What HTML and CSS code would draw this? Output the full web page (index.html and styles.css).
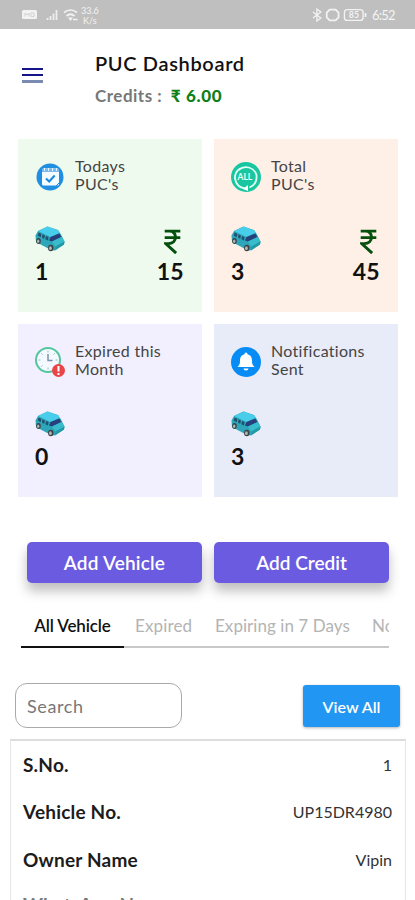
FILE: index.html
```html
<!DOCTYPE html>
<html lang="en">
<head>
<meta charset="utf-8">
<title>PUC Dashboard</title>
<link rel="stylesheet" href="styles.css">
</head>
<body>
<svg width="0" height="0" class="defs" aria-hidden="true">
  <symbol id="car" viewBox="0 0 30 26">
    <path d="M0.500 9.500 L3 5 L12.500 0.500 L23 4 L26 8.500 L29.500 15.500 L29 18.500 L19.500 24.500 L16 24 L1 16 Z" fill="#2ca6b8"/>
    <path d="M3 5 L12.500 0.500 L23.500 4.500 L24.500 7 L15.500 11 Z" fill="#48cdeb"/>
    <path d="M3.500 6.500 L13.500 11 L13 14.500 L2.800 9.800 Z" fill="#1d5471"/>
    <path d="M15.500 11 L24.200 7.500 L26.500 11 L17 15.500 L14 14.500 Z" fill="#27407c"/>
    <path d="M17 15.500 L26.500 11 L29.500 15.500 L20.500 20.500 Z" fill="#38bccb"/>
    <path d="M20.500 20.500 L29.500 15.500 L29 18.500 L20 24.500 Z" fill="#219aa5"/>
    <path d="M7 7.500l-.7 4.500M10.500 9l-.7 4.500" stroke="#35b5cc" fill="none"/>
    <ellipse cx="3.500" cy="15" rx="2.300" ry="3" fill="#3c4147"/><ellipse cx="3.200" cy="15.200" rx="1.200" ry="1.700" fill="#b3b5b3"/>
    <ellipse cx="15.800" cy="22" rx="2.700" ry="3.300" fill="#3c4147"/><ellipse cx="15.400" cy="22.200" rx="1.400" ry="1.900" fill="#b3b5b3"/>
  </symbol>
  <symbol id="rupee" viewBox="0 0 16 24">
    <path d="M.5 2H15.500M.5 8.300H15.500M1 2H5C13 2 13 14 4 14H1.500L11.500 23.200" fill="none" stroke="#06500d" stroke-width="2.800"/>
  </symbol>
</svg>

<div class="status">
  <svg class="status-left" viewBox="0 0 57 24">
    <rect x="0" y="7" width="15" height="9" rx="1.500" fill="#f2f2f2"/>
    <path d="M3 13.500V10l2 2 2-2v3.500M9 10v3.500h3V10z" fill="none" stroke="#d2d2d2"/>
    <path d="M25.500 17v-2M28.500 17v-4M31.500 17v-6.500M34.500 17V7" stroke="#eee" stroke-width="1.800"/>
    <path d="M42 9.500q6.500-5 13 0M44.500 13q4-3.500 8 0" fill="none" stroke="#f2f2f2" stroke-width="1.700"/>
    <path d="M46 14.500h5l-2.500 3.500z" fill="#f2f2f2"/><path d="M51 16.500h4.500" stroke="#f2f2f2" stroke-width="1.500"/>
  </svg>
  <span class="rate"><span>33.6</span><span>K/s</span></span>
  <svg class="status-right" viewBox="0 0 58 16">
    <path d="M1 5l8 6-4 3V2l4 3-8 6" fill="none" stroke="#f3f3f3" stroke-width="1.300"/>
    <path d="M18 2.500h6l3 3v5l-3 3h-6l-3-3v-5z" fill="none" stroke="#f3f3f3" stroke-width="1.800"/>
    <rect x="33" y="2.500" width="19" height="11" rx="3" fill="none" stroke="#f3f3f3" stroke-width="1.400"/><path d="M54.500 6v4" stroke="#f3f3f3" stroke-width="1.800"/>
    <text x="37.500" y="11.200" class="batt">85</text>
  </svg>
  <span class="time">6:52</span>
</div>

<header class="header">
  <div class="menu"><i></i><i></i><i></i></div>
  <div>
    <h1 class="title">PUC Dashboard</h1>
    <p class="credits">Credits : <b>₹ 6.00</b></p>
  </div>
</header>

<section class="cards">
  <article class="card green">
    <div class="card-head">
      <svg class="icon" viewBox="0 0 30 30"><circle cx="15" cy="15" r="13.500" fill="#208fe2"/><rect x="7" y="6.500" width="17" height="17" rx="1.500" fill="#f5fcff"/><path d="M7 8.500h17" stroke="#78baf0" stroke-width="3"/><path d="M9.500 6v3M13.500 6v3M17.500 6v3M21.500 6v3" stroke="#e4f5ff"/><path d="M11 16.500l3.200 3 5.500-6" fill="none" stroke="#1787df" stroke-width="2"/><path d="M21 24l3-3" stroke="#1787df"/></svg>
      <span class="label">Todays<br>PUC's</span>
    </div>
    <div class="stats"><div class="stat"><svg class="car"><use href="#car"/></svg><b>1</b></div><div class="stat money"><svg class="rupee"><use href="#rupee"/></svg><b>15</b></div></div>
  </article>
  <article class="card peach">
    <div class="card-head">
      <svg class="icon" viewBox="0 0 30 30"><circle cx="15" cy="15" r="15" fill="#18c6a0"/><path d="M9 6.500Q3.500 10.500 4 16.500Q5.500 25.500 14 26.500M7.500 8A11 11 0 0 1 25.500 13Q26.500 22 18.500 25.500" fill="none" stroke="#e2fff5" stroke-width="1.800"/><path d="M12 27l5-4v6z" fill="#fff"/><text x="6.500" y="18" class="all">ALL</text></svg>
      <span class="label">Total<br>PUC's</span>
    </div>
    <div class="stats"><div class="stat"><svg class="car"><use href="#car"/></svg><b>3</b></div><div class="stat money"><svg class="rupee"><use href="#rupee"/></svg><b>45</b></div></div>
  </article>
  <article class="card lilac">
    <div class="card-head">
      <svg class="icon" viewBox="0 0 30 30"><circle cx="13" cy="13" r="12" fill="#f4faff" stroke="#54c69d" stroke-width="2"/><path d="M13 3.500v2M13 20.500v2M3.500 13h2M20.500 13h2M6.300 6.300l1.300 1.300M18.500 7.500l1.300-1.300M6.300 19.700l1.300-1.300" stroke="#93bfc5"/><path d="M13 7v6.500h4.500" fill="none" stroke="#7895ae" stroke-width="1.500"/><circle cx="23.500" cy="23.500" r="6.500" fill="#e94549"/><path d="M23.500 19v5.500M23.500 26v2" stroke="#fff" stroke-width="2"/></svg>
      <span class="label">Expired this<br>Month</span>
    </div>
    <div class="stats"><div class="stat"><svg class="car"><use href="#car"/></svg><b>0</b></div></div>
  </article>
  <article class="card blue">
    <div class="card-head">
      <svg class="icon" viewBox="0 0 30 30"><circle cx="15" cy="15" r="15" fill="#078bf4"/><path d="M15 5.500a1.500 1.500 0 0 1 1.500 1.700C20 8 21 10.500 21 14c0 3 .8 4.500 2.500 6h-17C8.200 18.500 9 17 9 14c0-3.500 1-6 4.500-6.800A1.500 1.500 0 0 1 15 5.500z" fill="#fff"/><path d="M12.500 21.500h5a2.500 2 0 0 1-5 0z" fill="#fff"/></svg>
      <span class="label">Notifications<br>Sent</span>
    </div>
    <div class="stats"><div class="stat"><svg class="car"><use href="#car"/></svg><b>3</b></div></div>
  </article>
</section>

<div class="actions"><button class="btn vehicle">Add Vehicle</button><button class="btn credit">Add Credit</button></div>

<nav class="tabs"><span class="tab active">All Vehicle</span><span class="tab expired">Expired</span><span class="tab week">Expiring in 7 Days</span><span class="tab">Not Expired</span></nav>

<div class="tools"><input class="search" placeholder="Search"><button class="view">View All</button></div>

<section class="table">
  <div class="row"><b>S.No.</b><span>1</span></div>
  <div class="row"><b>Vehicle No.</b><span class="plate">UP15DR4980</span></div>
  <div class="row"><b>Owner Name</b><span>Vipin</span></div>
  <div class="row last"><b>WhatsApp No.</b></div>
</section>
</body>
</html>
```
FILE: styles.css
```css
* { box-sizing: border-box; }
html, body { height: 900px; overflow: hidden; }
body { margin: 0; background: #fff; color: #111; font-family: Lato, "Noto Sans", sans-serif; }
.defs { display: none; }
h1, p { margin: 0; }
button { border: 0; padding: 0; font-family: inherit; color: #fff; }

.status { height: 29px; background: #bfbfbf; color: #f4f4f4; display: flex; align-items: center; padding: 0 21px 0 22px; }
.status-left { width: 57px; height: 24px; margin-top: 0; }
.rate { display: flex; flex-direction: column; font-size: 9px; line-height: 10px; margin-left: 2px; align-items: center; padding-top: 2px; }
.status-right { width: 57px; height: 16px; margin-left: auto; margin-right: 3px; }
.batt { font: bold 9px Lato; fill: #f3f3f3; }
.time { font-size: 13px; letter-spacing: -.8px; width: 22px; white-space: nowrap; padding-top: 1px; }

.header { height: 110px; display: flex; padding-left: 22px; }
.menu { width: 73px; padding-top: 39px; display: flex; flex-direction: column; gap: 4px; }
.menu i { width: 21px; height: 2px; background: #15158a; }
.menu i:last-child { height: 3px; background: #7a8ab0; }
.title { font-size: 20px; line-height: 24px; font-weight: 600; letter-spacing: .65px; margin-top: 22px; white-space: nowrap; }
.credits { font-size: 17px; line-height: 22px; font-weight: 700; color: #777; letter-spacing: .5px; margin-top: 10px; white-space: nowrap; }
.credits b { color: #108016; font-weight: 900; letter-spacing: .65px; margin-left: 4px; }

.cards { display: grid; grid-template-columns: 184px 184px; grid-auto-rows: 173px; gap: 12px; padding-left: 18px; }
.card { padding: 18px 18px 0 17px; }
.green { background: #effaee; }
.peach { background: #fff0e7; }
.lilac { background: #f2f0ff; }
.blue { background: #e8ebf8; }
.card-head { display: flex; height: 69px; }
.icon { width: 30px; height: 30px; margin: 4.500px 10px 0 0; overflow: visible; }
.all { font: bold 8.500px Lato; fill: #e9fff7; }
.label { font-size: 16px; line-height: 18px; letter-spacing: .3px; color: #444; white-space: nowrap; }
.stats { display: flex; justify-content: space-between; }
.stat { display: flex; flex-direction: column; align-items: flex-start; }
.stat b { font-size: 23px; line-height: 28px; letter-spacing: .3px; }
.car { width: 30px; height: 26px; margin-bottom: 5px; }
.rupee { width: 17px; height: 25px; margin: 3px 3px 3px 0; }
.money { align-items: flex-end; }

.actions { display: flex; gap: 12px; margin: 45px 0 0 27px; }
.btn { width: 175px; height: 41px; border-radius: 5px; background: #6b5be0; font-size: 19px; font-weight: 600; letter-spacing: .2px; box-shadow: 0 8px 12px rgba(0,0,0,.25); }
.credit { letter-spacing: 0; }

.tabs { display: flex; margin: 22px 26px 0 21px; height: 43px; overflow: hidden; background: linear-gradient(#c8c8c8, #c8c8c8) bottom / 100% 2px no-repeat; }
.tab { font-size: 17px; line-height: 22px; padding-top: 10px; color: #b4b4b4; white-space: nowrap; letter-spacing: .05px; }
.active { width: 103px; height: 43px; margin-right: 11px; flex: none; text-align: center; color: #111; font-weight: 600; letter-spacing: -.15px; background: linear-gradient(#111, #111) bottom / 100% 2px no-repeat; }
.expired { width: 80px; flex: none; letter-spacing: .15px; }
.week { width: 157px; flex: none; }

.tools { display: flex; justify-content: space-between; margin: 35px 15px 0; }
.search { width: 167px; height: 45px; border: 1px solid #aaa; border-radius: 12px; padding: 0 11px; font: 18px Lato; letter-spacing: .6px; }
.search::placeholder { color: #777; }
.view { width: 97px; height: 42px; margin-top: 2px; border-radius: 3px; background: #2196f3; font-size: 16px; font-weight: 600; box-shadow: 0 1px 3px rgba(0,0,0,.3); }

.table { margin: 11px 9px 0 10px; border: 1px solid #e7e7e7; border-top: 2px solid #ddd; padding: 0 13px 0 12px; height: 200px; overflow: hidden; }
.row { height: 47.300px; display: flex; align-items: center; justify-content: space-between; font-size: 16px; color: #333; }
.row b { font-size: 19px; font-weight: 700; color: #1c1c1c; letter-spacing: .2px; }
.last { height: 44px; }
.last b { color: #777; }
```
